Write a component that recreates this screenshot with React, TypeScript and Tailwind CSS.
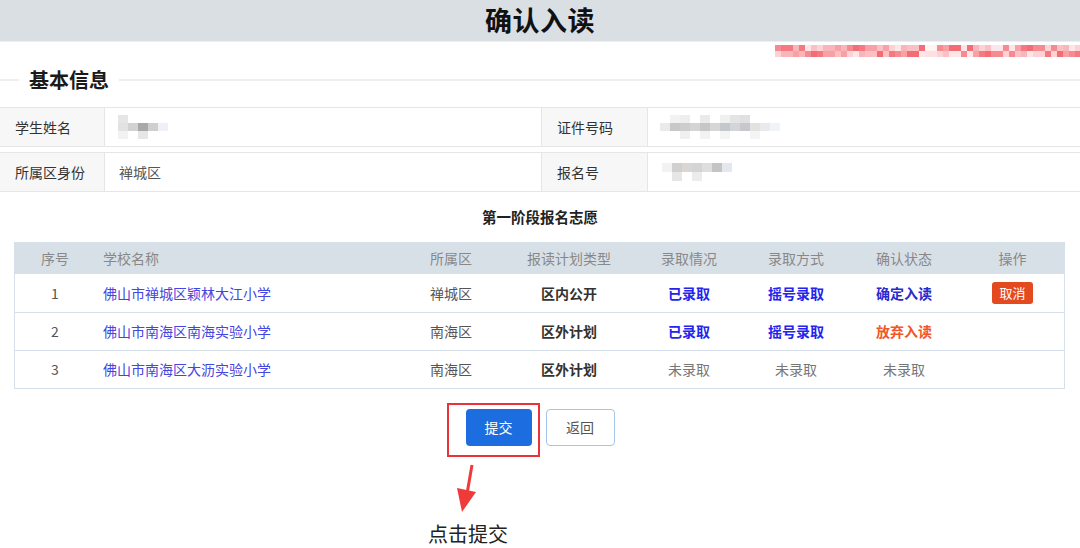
import React from "react";

const FONT = { fontFamily: '"Noto Sans CJK SC", "Noto Sans", "Liberation Sans", sans-serif' };

function Pixels({ colors, w = 8, h = 8 }: { colors: string[][]; w?: number; h?: number }) {
  return (
    <div className="flex flex-col blur-[0.6px]">
      {colors.map((row, i) => (
        <div key={i} className="flex">
          {row.map((c, j) => (
            <div key={j} className="shrink-0" style={{ width: w, height: h, background: c }} />
          ))}
        </div>
      ))}
    </div>
  );
}

const redPal = ["#f58a90", "#f9b6ba", "#f36d75", "#fcd2d4", "#f7a0a5", "#fde6e7", "#f47a81", "#fbc0c3"];
const redStrip = Array.from({ length: 2 }, (_, r) =>
  Array.from({ length: 52 }, (_, i) => {
    if (i === 25 || i === 26) return r === 0 ? "#fff4f4" : "#fde0e2";
    return redPal[(i * 5 + r * 3 + ((i * i) % 7)) % redPal.length];
  })
);

type Row = {
  seq: string;
  school: string;
  district: string;
  plan: string;
  admit: React.ReactNode;
  method: React.ReactNode;
  confirm: React.ReactNode;
  op?: boolean;
  h: string;
};

const rows: Row[] = [
  {
    seq: "1",
    school: "佛山市禅城区颖林大江小学",
    district: "禅城区",
    plan: "区内公开",
    admit: <span className="font-bold text-[#2424ee]">已录取</span>,
    method: <span className="font-bold text-[#2424ee]">摇号录取</span>,
    confirm: <span className="font-bold text-[#2a2ad0]">确定入读</span>,
    op: true,
    h: "h-[39px]",
  },
  {
    seq: "2",
    school: "佛山市南海区南海实验小学",
    district: "南海区",
    plan: "区外计划",
    admit: <span className="font-bold text-[#2424ee]">已录取</span>,
    method: <span className="font-bold text-[#2424ee]">摇号录取</span>,
    confirm: <span className="font-bold text-[#f2562a]">放弃入读</span>,
    h: "h-[38px]",
  },
  {
    seq: "3",
    school: "佛山市南海区大沥实验小学",
    district: "南海区",
    plan: "区外计划",
    admit: <span className="text-[#777]">未录取</span>,
    method: <span className="text-[#777]">未录取</span>,
    confirm: <span className="text-[#777]">未录取</span>,
    h: "h-[38px]",
  },
];

const cols = "grid grid-cols-[80px_306px_100px_136px_104px_110px_106px_1fr]";

export default function App() {
  return (
    <div style={FONT} className="w-[1080px] h-[548px] bg-white overflow-hidden text-[14px] text-[#333]">
      <div className="h-[42px] bg-[#d9dfe3] flex items-center justify-center border-b border-[#eceff1]">
        <span className="text-[27px] font-bold text-[#111] tracking-[0.5px]">确认入读</span>
      </div>

      <div className="h-[16px] flex justify-end pt-[3px]">
        <div className="w-[305px] overflow-hidden">
          <Pixels colors={redStrip} w={6} h={6} />
        </div>
      </div>

      <div className="h-[44px] flex items-center">
        <div className="w-[19px] h-[2px] bg-[#eeeeee]" />
        <span className="px-[10px] text-[20px] font-bold text-[#1a1a1a]">基本信息</span>
        <div className="flex-1 h-[2px] bg-[#eeeeee]" />
      </div>

      <div className="mt-[5px] flex flex-col gap-[5px]">
        <div className="h-[40px] flex border-y border-[#e6e6e6]">
          <div className="w-[105px] bg-[#f7f7f7] border-r border-[#e6e6e6] flex items-center pl-[15px] text-[#333]">学生姓名</div>
          <div className="w-[436px] flex items-center pl-[13px]">
            <Pixels
              w={10}
              h={8}
              colors={[
                ["#e6e6e6", "#fff", "#fff", "#fff", "#fff"],
                ["#e2e2e2", "#d2d2d2", "#a8a8a8", "#cfcfcf", "#eef2f8"],
                ["#f2f2f2", "#fff", "#e6e6e6", "#fff", "#fff"],
              ]}
            />
          </div>
          <div className="w-[107px] bg-[#f7f7f7] border-x border-[#e6e6e6] flex items-center pl-[15px] text-[#333]">证件号码</div>
          <div className="flex-1 flex items-center pl-[12px]">
            <Pixels
              w={10}
              h={8}
              colors={[
                ["#fff", "#f2f2f2", "#eeeeee", "#fff", "#eaeaea", "#fff", "#f0f0f0", "#e4e4e4", "#e0e0e0", "#fff", "#fff", "#fff", "#fff", "#fff"],
                ["#eaeaea", "#c8c8c8", "#cdcdcd", "#d4d4d4", "#c6c6c6", "#d6d6d6", "#c4c8cc", "#d2d6da", "#c6c8cb", "#e4e2e0", "#e8eaee", "#f0f3f8", "#fff", "#fff"],
                ["#fff", "#fff", "#f0f0f0", "#fff", "#f2f2f2", "#fff", "#f4f4f4", "#fff", "#fff", "#f4f4f4", "#fff", "#fff", "#fff", "#fff"],
              ]}
            />
          </div>
        </div>
        <div className="h-[40px] flex border-y border-[#e6e6e6]">
          <div className="w-[105px] bg-[#f7f7f7] border-r border-[#e6e6e6] flex items-center pl-[15px] text-[#333]">所属区身份</div>
          <div className="w-[436px] flex items-center pl-[14px] text-[#555]">禅城区</div>
          <div className="w-[107px] bg-[#f7f7f7] border-x border-[#e6e6e6] flex items-center pl-[15px] text-[#333]">报名号</div>
          <div className="flex-1 flex items-center pl-[14px]">
            <Pixels
              w={10}
              h={9}
              colors={[
                ["#f2f2f2", "#d0d0d0", "#dad6d4", "#d4d4d4", "#dedede", "#c4c4c4", "#e4e8ee", "#fff"],
                ["#fff", "#e6e6e6", "#fff", "#ececec", "#fff", "#fff", "#fff", "#fff"],
              ]}
            />
          </div>
        </div>
      </div>

      <div className="h-[50px] flex items-center justify-center font-bold text-[14.5px] text-[#222]">第一阶段报名志愿</div>

      <div className="mx-[14px] border border-[#d6e0ea] w-[1051px]">
        <div className={`${cols} h-[30px] bg-[#d8e0e7] text-[#888] items-center`}>
          <div className="text-center">序号</div>
          <div className="pl-[8px]">学校名称</div>
          <div className="text-center">所属区</div>
          <div className="text-center">报读计划类型</div>
          <div className="text-center">录取情况</div>
          <div className="text-center">录取方式</div>
          <div className="text-center">确认状态</div>
          <div className="text-center pl-[4px]">操作</div>
        </div>
        {rows.map((r) => (
          <div key={r.seq} className={`${cols} ${r.h} border-t border-[#d6e0ea] items-center`}>
            <div className="text-center text-[#555]">{r.seq}</div>
            <div className="pl-[8px] text-[#4545e0]">{r.school}</div>
            <div className="text-center text-[#555]">{r.district}</div>
            <div className="text-center font-bold text-[#333]">{r.plan}</div>
            <div className="text-center">{r.admit}</div>
            <div className="text-center">{r.method}</div>
            <div className="text-center">{r.confirm}</div>
            <div className="flex justify-center pl-[4px]">
              {r.op && (
                <span className="w-[41px] h-[22px] rounded-[3px] bg-[#e34a1f] text-white text-[13px] flex items-center justify-center">
                  取消
                </span>
              )}
            </div>
          </div>
        ))}
      </div>

      <div className="mt-[20px] flex justify-center gap-[14px]">
        <div className="relative">
          <div className="absolute left-[-19px] top-[-6px] right-[-8px] bottom-[-11px] border-2 border-[#ea3338]" />
          <button className="w-[66px] h-[37px] rounded-[4px] bg-[#1c6ee0] text-white text-[14px] flex items-center justify-center">
            提交
          </button>
        </div>
        <button className="w-[69px] h-[37px] rounded-[4px] border border-[#a6c5ea] bg-white text-[#555] text-[14px] flex items-center justify-center">
          返回
        </button>
      </div>

      <div className="mt-[17px] ml-[452px] w-[30px] h-[52px]">
        <svg width="30" height="52" viewBox="0 0 30 52">
          <line x1="20" y1="2" x2="15.5" y2="28" stroke="#f03a3a" strokeWidth="3" />
          <polygon points="5,25 24,29 10,49" fill="#f03a3a" />
        </svg>
      </div>
      <div className="ml-[428px] mt-[6px] text-[20px] leading-[26px] text-[#222]">点击提交</div>
    </div>
  );
}
